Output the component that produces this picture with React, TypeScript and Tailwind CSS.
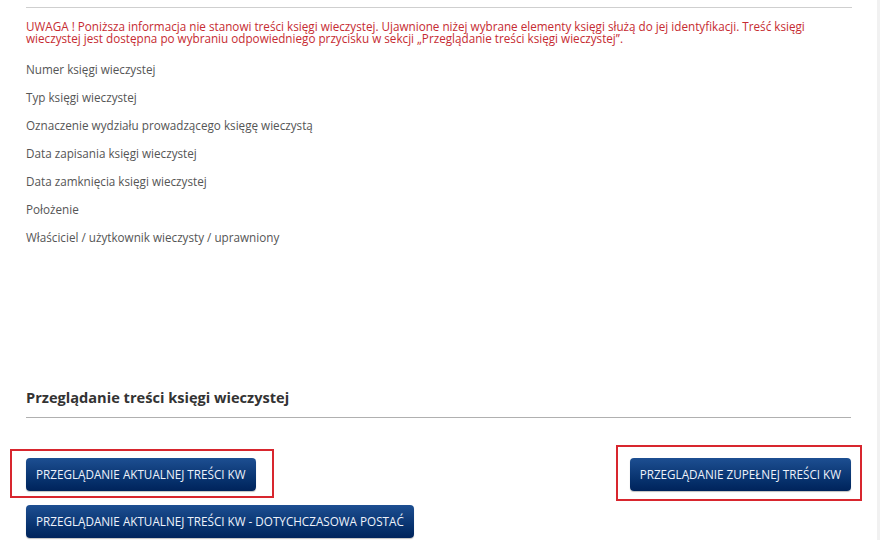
import React from "react";

const items = [
  "Numer księgi wieczystej",
  "Typ księgi wieczystej",
  "Oznaczenie wydziału prowadzącego księgę wieczystą",
  "Data zapisania księgi wieczystej",
  "Data zamknięcia księgi wieczystej",
  "Położenie",
  "Właściciel / użytkownik wieczysty / uprawniony",
];

function Btn({ children }: { children: React.ReactNode }) {
  return (
    <button className="h-[33px] rounded-[4px] bg-gradient-to-b from-[#1d4f92] to-[#00235b] px-[10px] text-[11.7px] leading-[33px] text-[#eef3fb] whitespace-nowrap shadow-[0_1px_1px_rgba(0,0,0,0.25)]">
      {children}
    </button>
  );
}

export default function App() {
  return (
    <div
      className="relative flex h-[540px] w-[880px] overflow-hidden bg-white"
      style={{ fontFamily: '"Open Sans", "Noto Sans", sans-serif' }}
    >
      <div className="flex-1 px-[26px] pt-[7px]">
        <div className="mr-[-1px] h-px bg-[#cfcfcf]" />
        <p className="mt-[12px] text-[11.7px] leading-[12px] text-[#c62b31]">
          UWAGA ! Poniższa informacja nie stanowi treści księgi wieczystej. Ujawnione niżej wybrane elementy księgi służą do jej identyfikacji. Treść księgi
          <br />
          wieczystej jest dostępna po wybraniu odpowiedniego przycisku w sekcji „Przeglądanie treści księgi wieczystej”.
        </p>
        <ul className="mt-[11px]">
          {items.map((t) => (
            <li key={t} className="h-[28px] text-[11.7px] leading-[28px] text-[#555555]">
              {t}
            </li>
          ))}
        </ul>
        <h2 className="mt-[136px] text-[14.6px] font-bold leading-[20px] text-[#333333]">
          Przeglądanie treści księgi wieczystej
        </h2>
        <div className="mt-[10px] h-px bg-[#b0b0b0]" />
        <div className="mt-[40px] flex items-start justify-between">
          <div className="flex flex-col items-start gap-[14px]">
            <div className="relative">
              <Btn>PRZEGLĄDANIE AKTUALNEJ TREŚCI KW</Btn>
              <div className="pointer-events-none absolute -left-[16px] -top-[9px] -right-[18px] -bottom-[7px] border-2 border-[#d8262e]" />
            </div>
            <Btn>PRZEGLĄDANIE AKTUALNEJ TREŚCI KW - DOTYCHCZASOWA POSTAĆ</Btn>
          </div>
          <div className="relative">
            <Btn>PRZEGLĄDANIE ZUPEŁNEJ TREŚCI KW</Btn>
            <div className="pointer-events-none absolute -left-[14px] -top-[13px] -right-[11px] -bottom-[10px] border-2 border-[#d8262e]" />
          </div>
        </div>
      </div>
      <div className="w-[3px] bg-[#f1f1f1]" />
    </div>
  );
}
